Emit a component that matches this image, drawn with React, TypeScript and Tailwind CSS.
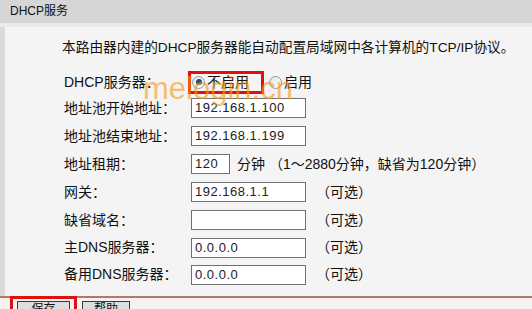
import React from 'react';

const font = { fontFamily: '"Liberation Sans", "Noto Sans CJK SC", sans-serif' };

const rows: { label: string; value: string; short?: boolean; note?: string }[] = [
    { label: '地址池开始地址：', value: '192.168.1.100' },
    { label: '地址池结束地址：', value: '192.168.1.199' },
    { label: '地址租期：', value: '120', short: true, note: '分钟 （1～2880分钟，缺省为120分钟）' },
    { label: '网关：', value: '192.168.1.1', note: '（可选）' },
    { label: '缺省域名：', value: '', note: '（可选）' },
    { label: '主DNS服务器：', value: '0.0.0.0', note: '（可选）' },
    { label: '备用DNS服务器：', value: '0.0.0.0', note: '（可选）' },
];

const Radio = ({ checked }: { checked?: boolean }) => (
    <span className="w-[13px] h-[13px] rounded-full border border-[#8a9aa8] bg-gradient-to-br from-[#dfe5ea] to-[#ffffff] flex items-center justify-center shrink-0">
        {checked && <span className="w-[6px] h-[6px] rounded-full bg-[#1f4f7a]" />}
    </span>
);

export default function App() {
    return (
        <div className="relative w-[532px] h-[309px] overflow-hidden bg-[#f4f4f4] text-[14px] text-[#111] flex flex-col" style={font}>
            <div className="h-[23px] bg-[#d6d6d6] pl-[10px] leading-[23px] text-[12px]">DHCP服务</div>
            <div className="h-[4px] bg-[#ebebeb]" />
            <div className="h-[269px] border-l-[5px] border-[#dadada] pt-[13px]">
                <div className="pl-[57px] leading-[16px] text-[13.7px]">
                    本路由器内建的DHCP服务器能自动配置局域网中各计算机的TCP/IP协议。
                </div>
                <div className="mt-[14px] pl-[59px] flex flex-col">
                    <div className="h-[24px] flex items-center">
                        <div className="w-[124px]">DHCP服务器：</div>
                        <div className="h-[23px] border-[3px] border-[#e01010] flex items-center pl-[1px] pr-[12px] gap-[2px]">
                            <Radio checked />
                            <span>不启用</span>
                        </div>
                        <div className="flex items-center gap-[2px] ml-[5px]">
                            <Radio />
                            <span>启用</span>
                        </div>
                    </div>
                    {rows.map((r, i) => (
                        <div key={r.label} className={`${i < 5 ? 'h-[28px]' : 'h-[27px]'} flex items-center`}>
                            <div className="w-[127px]">{r.label}</div>
                            <div className={`${r.short ? 'w-[39px]' : 'w-[115px]'} h-[20px] border border-[#707070] bg-white pl-[3px] text-[13px] tracking-[0.5px] leading-[18px] text-[#222]`}>
                                {r.value}
                            </div>
                            {r.note && <span className={r.short ? 'ml-[7px]' : 'ml-[10px]'}>{r.note}</span>}
                        </div>
                    ))}
                </div>
            </div>
            <div className="h-[2px] bg-[#b07a6a]" />
            <div className="flex-1 bg-[#f7f1ef] relative">
                <div className="absolute left-[10px] top-[-2px] w-[67px] h-[20px] border-[3px] border-[#e01010] flex items-start justify-center pt-[2px]">
                    <div className="w-[53px] h-[16px] border border-[#3a3a3a] bg-[#dedede] text-center text-[12px] leading-[14px]">保存</div>
                </div>
                <div className="absolute left-[82px] top-[3px] w-[48px] h-[16px] border border-[#3a3a3a] bg-[#dedede] text-center text-[12px] leading-[14px]">帮助</div>
            </div>
            <div className="absolute left-[143px] top-[72px] text-[31px] leading-[34px] text-[#f39a14] opacity-60 pointer-events-none" style={{ fontFamily: '"Liberation Sans", sans-serif' }}>
                melogin.cn
            </div>
        </div>
    );
}
